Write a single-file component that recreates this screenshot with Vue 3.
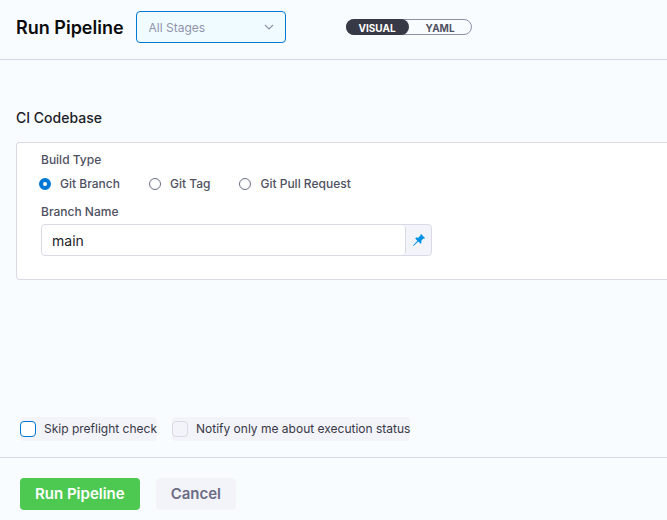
<script setup>
import { ref } from 'vue'

const stage = ref('all')
const view = ref('visual')
const buildType = ref('branch')
const branch = ref('main')
const skipPreflight = ref(false)
const notifyOnlyMe = ref(false)

const buildTypes = [
  { value: 'branch', label: 'Git Branch' },
  { value: 'tag', label: 'Git Tag' },
  { value: 'pr', label: 'Git Pull Request' }
]
</script>

<template>
  <form class="page" @submit.prevent>
    <header class="header">
      <h1 class="title">Run Pipeline</h1>
      <div class="stages">
        <select v-model="stage" class="stages-select" aria-label="Stages">
          <option value="all">All Stages</option>
        </select>
        <svg class="chevron" viewBox="0 0 10 6" aria-hidden="true">
          <path d="M1 1l4 4 4-4" />
        </svg>
      </div>
      <div class="toggle" role="group" aria-label="Editor view">
        <button type="button" :class="['toggle-item', { active: view === 'visual' }]" @click="view = 'visual'">VISUAL</button>
        <button type="button" :class="['toggle-item', { active: view === 'yaml' }]" @click="view = 'yaml'">YAML</button>
      </div>
    </header>

    <main class="content">
      <h2 class="section-title">CI Codebase</h2>
      <section class="card">
        <fieldset class="build-type">
          <legend class="label">Build Type</legend>
          <div class="radios">
            <label v-for="t in buildTypes" :key="t.value" class="radio">
              <input v-model="buildType" type="radio" name="build-type" :value="t.value" />
              <span>{{ t.label }}</span>
            </label>
          </div>
        </fieldset>
        <label class="label" for="branch-name">Branch Name</label>
        <div class="branch-field">
          <input id="branch-name" v-model="branch" class="branch-input" type="text" />
          <button type="button" class="pin" aria-label="Fixed value">
            <svg viewBox="0 0 12 12" aria-hidden="true">
              <path d="M8 0L12 4L11.2 4.7L10.4 4.5L8.3 6.7L8.4 9L7.6 9.8L5.2 7.5L0.6 12L0 11.4L4.4 6.7L2.2 4.4L3 3.6L5.3 3.7L7.5 1.6L7.3 .7Z" />
            </svg>
          </button>
        </div>
      </section>
    </main>

    <div class="options">
      <label class="option">
        <input v-model="skipPreflight" class="accent" type="checkbox" />
        <span>Skip preflight check</span>
      </label>
      <label class="option">
        <input v-model="notifyOnlyMe" type="checkbox" />
        <span>Notify only me about execution status</span>
      </label>
    </div>

    <footer class="footer">
      <button type="submit" class="btn primary">Run Pipeline</button>
      <button type="button" class="btn">Cancel</button>
    </footer>
  </form>
</template>

<style>
body {
  margin: 0;
  background: #f9fcff;
}
</style>

<style scoped>
.page,
.page * {
  box-sizing: border-box;
}

.page {
  display: flex;
  flex-direction: column;
  min-height: 100vh;
  overflow: hidden;
  color: #4f5162;
  font-family: Inter, "Liberation Sans", sans-serif;
  font-size: 12px;
  line-height: 20px;
}

button,
input,
select {
  margin: 0;
  font-family: inherit;
}

.header {
  display: flex;
  align-items: center;
  height: 60px;
  padding: 0 16px 5px;
  border-bottom: 1px solid #d3dae6;
}

.title {
  margin: 0 12px 0 0;
  padding-top: 2px;
  color: #0b0b0d;
  font-size: 18px;
  font-weight: 600;
  line-height: 26px;
  white-space: nowrap;
}

.stages {
  position: relative;
  width: 150px;
  margin-right: 60px;
}

.stages-select {
  display: block;
  width: 100%;
  height: 32px;
  padding: 0 28px 0 12px;
  appearance: none;
  border: 1px solid #0278d5;
  border-radius: 4px;
  background: #effbff;
  color: #9293ab;
  font-size: 12px;
}

.chevron {
  position: absolute;
  top: 13px;
  right: 12px;
  width: 10px;
  height: 6px;
  fill: none;
  stroke: #9293ab;
  stroke-width: 1.2;
  pointer-events: none;
}

.toggle {
  display: flex;
  width: 126px;
  height: 16px;
  border: 1px solid #8f90a6;
  border-radius: 8px;
}

.toggle-item {
  flex: 1;
  height: 16px;
  margin: -1px 0;
  padding: 2px 0 0;
  border: 0;
  border-radius: 8px;
  background: none;
  color: #4f5162;
  font-size: 10px;
  font-weight: 700;
  line-height: 14px;
}

.toggle-item:first-child {
  margin-left: -1px;
}

.toggle-item:last-child {
  margin-right: -1px;
}

.toggle-item.active {
  background: #383946;
  color: #fff;
}

.content {
  flex: 1;
  padding: 48px 0 24px 16px;
}

.section-title {
  margin: 0 0 14px;
  color: #1c1c28;
  font-size: 14px;
  font-weight: 500;
  line-height: 20px;
}

.card {
  padding: 7px 24px 23px;
  border: 1px solid #d9dae5;
  border-right: 0;
  border-radius: 4px 0 0 4px;
  background: #fff;
}

.build-type {
  margin: 0 0 8px;
  padding: 0;
  border: 0;
}

.label {
  display: block;
  margin-bottom: 2px;
  padding: 0;
  font-weight: 500;
}

.radios {
  display: flex;
  gap: 29px;
  margin-left: -2px;
  padding-top: 2px;
}

.radio {
  display: flex;
  align-items: center;
  gap: 9px;
  font-weight: 500;
}

.radio input {
  width: 12px;
  height: 12px;
  appearance: none;
  border: 1px solid #6b6d85;
  border-radius: 50%;
  background: #fff;
}

.radio input:checked {
  border: 4px solid #0278d5;
}

.branch-field {
  display: flex;
  max-width: 391px;
  height: 32px;
  border: 1px solid #d9dae5;
  border-radius: 4px;
  background: #f3f3fa;
}

.branch-input {
  flex: 1;
  min-width: 0;
  padding: 0 10px;
  border: 0;
  border-right: 1px solid #d9dae5;
  border-radius: 4px;
  background: #fff;
  color: #22222a;
  font-size: 14px;
}

.pin {
  display: flex;
  align-items: center;
  justify-content: center;
  width: 25px;
  padding: 0;
  border: 0;
  background: none;
}

.pin svg {
  width: 12px;
  height: 12px;
  fill: #0092e4;
}

.options {
  display: flex;
  gap: 15px;
  padding: 0 20px 16px;
}

.option {
  display: flex;
  align-items: center;
  gap: 8px;
  height: 24px;
  border-radius: 4px;
  background: #f3f3fa;
  color: #383946;
  white-space: nowrap;
}

.option input {
  width: 16px;
  height: 16px;
  appearance: none;
  border: 1px solid #d9dae5;
  border-radius: 4px;
}

.option input.accent {
  border-color: #0278d5;
  background: #fff;
}

.option input:checked {
  background: #0278d5;
}

.footer {
  display: flex;
  gap: 16px;
  padding: 20px 20px 10px;
  border-top: 1px solid #d9dae5;
}

.btn {
  height: 32px;
  padding: 0 15px;
  border: 0;
  border-radius: 4px;
  background: #f3f3fa;
  color: #6b6d85;
  font-size: 15px;
  font-weight: 600;
  line-height: 20px;
}

.btn.primary {
  background: #4dc952;
  color: #fff;
}
</style>
